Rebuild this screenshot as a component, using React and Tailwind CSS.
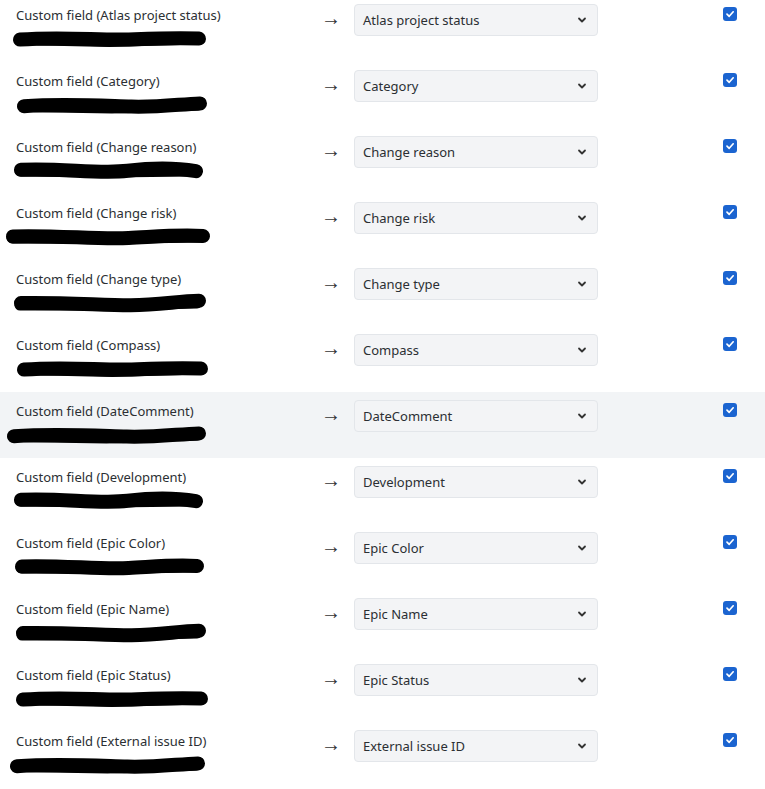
import React from 'react';

const rows = [
  { name: 'Atlas project status', s: [11, 206, 39] },
  { name: 'Category', s: [15, 207, 105] },
  { name: 'Change reason', s: [12, 203, 171] },
  { name: 'Change risk', s: [4, 210, 237] },
  { name: 'Change type', s: [12, 206, 302] },
  { name: 'Compass', s: [15, 208, 369] },
  { name: 'DateComment', s: [5, 206, 435], active: true },
  { name: 'Development', s: [12, 203, 501] },
  { name: 'Epic Color', s: [13, 204, 569] },
  { name: 'Epic Name', s: [14, 206, 634] },
  { name: 'Epic Status', s: [14, 208, 699] },
  { name: 'External issue ID', s: [8, 205, 765] },
];

// Överstruken text i skärmbilden – ritas som en tjock svart klotter-linje
function Scribble({ x1, x2, seed }) {
  const w = x2 - x1;
  const a = (seed % 5) - 2;
  const b = ((seed * 7) % 5) - 2;
  const d = `M8 ${10 + a * 0.6} C ${w * 0.25} ${8 + b * 0.6}, ${w * 0.45} ${12 - a * 0.6}, ${w * 0.6} ${11 + b * 0.6} S ${w * 0.85} ${8 + a * 0.6}, ${w - 8} ${9 - b * 0.6}`;
  return (
    <svg width={w} height="20" viewBox={`0 0 ${w} 20`} className="block" style={{ marginLeft: x1 - 15 }}>
      <path d={d} fill="none" stroke="#000" strokeWidth="14" strokeLinecap="round" />
      <path d={`M7 ${11 + b * 0.5} L ${w * 0.5} ${12 + a * 0.5} L ${w - 10} 10`} fill="none" stroke="#000" strokeWidth="11" strokeLinecap="round" />
    </svg>
  );
}

function Row({ row, i }) {
  return (
    <div className={`flex h-[66px] pl-2 ${row.active ? 'bg-[#f2f4f6]' : ''}`}>
      <div className="w-[310px] pl-2 pt-[10px] shrink-0">
        <div className="text-[13px] leading-[18px] text-[#2b2f33]">Custom field ({row.name})</div>
        <div className="mt-[5px]">
          <Scribble x1={row.s[0]} x2={row.s[1]} seed={i + 3} />
        </div>
      </div>
      <div className="w-[36px] pl-[3px] pt-[11px] text-[20px] font-light text-[#333] leading-[22px] shrink-0" style={{ fontFamily: '"Open Sans", sans-serif' }}>→</div>
      <div className="pt-[8px] shrink-0">
        <div className="flex items-center justify-between w-[244px] h-[32px] rounded-[4px] border border-[#e3e6ea] bg-[#f3f4f6] pl-2 pr-[10px]">
          <span className="text-[13px] text-[#2b2f33] pt-[1px]">{row.name}</span>
          <svg width="10" height="8" viewBox="0 0 10 8">
            <path d="M2 2.5 L5 5.5 L8 2.5" fill="none" stroke="#333" strokeWidth="1.8" strokeLinecap="round" strokeLinejoin="round" />
          </svg>
        </div>
      </div>
      <div className="pl-[125px] pt-[11px]">
        <div className="w-[14px] h-[14px] rounded-[3px] bg-[#1b64d0] flex items-center justify-center">
          <svg width="10" height="10" viewBox="0 0 10 10">
            <path d="M2 5.2 L4.2 7.3 L8.2 2.8" fill="none" stroke="#fff" strokeWidth="1.7" strokeLinecap="round" strokeLinejoin="round" />
          </svg>
        </div>
      </div>
    </div>
  );
}

export default function App() {
  return (
    <div className="w-[765px] h-[789px] overflow-hidden bg-white" style={{ fontFamily: '"Noto Sans", "Open Sans", sans-serif' }}>
      <div className="-mt-[4px]">
        {rows.map((r, i) => (
          <Row key={r.name} row={r} i={i} />
        ))}
      </div>
    </div>
  );
}
